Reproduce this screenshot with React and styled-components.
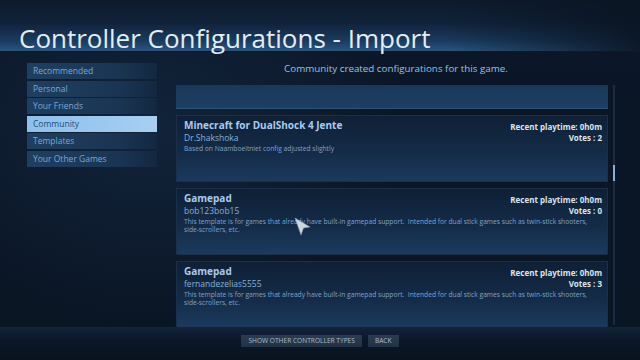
import React from "react";
import styled, { createGlobalStyle } from "styled-components";

const GlobalStyle = createGlobalStyle`
  html, body {
    margin: 0;
    padding: 0;
    background: #0a1422;
  }
  body {
    font-family: "Open Sans", "Noto Sans", sans-serif;
  }
`;

const tabs = [
  "Recommended",
  "Personal",
  "Your Friends",
  "Community",
  "Templates",
  "Your Other Games",
];

const gamepadText =
  "This template is for games that already have built-in gamepad support.  Intended for dual stick games such as twin-stick shooters, side-scrollers, etc.";

const configs = [
  {
    title: "Minecraft for DualShock 4 Jente",
    author: "Dr.Shakshoka",
    text: "Based on Naamboeitniet config adjusted slightly",
    votes: 2,
  },
  { title: "Gamepad", author: "bob123bob15", text: gamepadText, votes: 0 },
  { title: "Gamepad", author: "fernandezelias5555", text: gamepadText, votes: 3 },
];

export default function App() {
  return (
    <Page>
      <GlobalStyle />
      <Header>
        <Title>Controller Configurations - Import</Title>
      </Header>
      <Body>
        <Sidebar>
          {tabs.map(t => (
            <Tab key={t} active={t === "Community"}>
              {t}
            </Tab>
          ))}
        </Sidebar>
        <Main>
          <Subtitle>Community created configurations for this game.</Subtitle>
          <ListRow>
            <List>
              <Stub />
              {configs.map((c, i) => (
                <Card key={i}>
                  <CardInfo>
                    <CardTitle>{c.title}</CardTitle>
                    <Author>{c.author}</Author>
                    <Desc>{c.text}</Desc>
                  </CardInfo>
                  <Stats>
                    <div>Recent playtime: 0h0m</div>
                    <div>Votes : {c.votes}</div>
                  </Stats>
                </Card>
              ))}
            </List>
            <Scrollbar>
              <Thumb />
            </Scrollbar>
          </ListRow>
        </Main>
      </Body>
      <Footer>
        <Button>SHOW OTHER CONTROLLER TYPES</Button>
        <Button>BACK</Button>
      </Footer>
      <Cursor width="18" height="20" viewBox="0 0 18 20">
        <path d="M1 1 L16 10 L9.5 11 L7 18 Z" fill="#cfd6dd" stroke="#8e9aa6" strokeWidth="0.6" />
      </Cursor>
    </Page>
  );
}

const Page = styled.div`
  position: relative;
  width: 640px;
  height: 360px;
  overflow: hidden;
  display: flex;
  flex-direction: column;
  background:
    radial-gradient(ellipse 260px 200px at 150px 130px, rgba(30, 60, 95, 0.35), transparent),
    linear-gradient(180deg, #0b1728 0%, #0a1524 100%);
`;

const Header = styled.div`
  height: 51px;
  flex-shrink: 0;
  display: flex;
  align-items: flex-end;
  border-bottom: 1px solid #0d1828;
  background:
    linear-gradient(90deg, rgba(10, 20, 34, 0) 0%, rgba(10, 20, 34, 0) 70%, rgba(10, 20, 34, 0.9) 100%),
    linear-gradient(180deg, #0d1a2b 0%, #10223a 45%, #1a3b5e 80%, #2a5580 100%);
`;

const Title = styled.div`
  margin: 0 0 -5px 19px;
  font-size: 26px;
  line-height: 36px;
  color: #e4edf5;
  letter-spacing: 0;
  white-space: nowrap;
`;

const Body = styled.div`
  flex: 1;
  display: flex;
  min-height: 0;
`;

const Sidebar = styled.div`
  width: 130px;
  margin: 11px 0 0 27px;
  display: flex;
  flex-direction: column;
  gap: 1.5px;
`;

const Tab = styled.div`
  height: 16px;
  line-height: 16px;
  padding-left: 6px;
  font-size: 8.5px;
  color: ${p => (p.active ? "#234d7a" : "#7ba7d4")};
  background: ${p =>
    p.active
      ? "linear-gradient(90deg, #8ec0ec 0%, #a6cff2 100%)"
      : "linear-gradient(90deg, #1f3f61 0%, #1a3553 70%, #132840 100%)"};
`;

const Main = styled.div`
  flex: 1;
  display: flex;
  flex-direction: column;
  padding-left: 19px;
  min-height: 0;
`;

const Subtitle = styled.div`
  height: 33px;
  padding-top: 10px;
  box-sizing: border-box;
  text-align: center;
  width: 440px;
  font-size: 9.8px;
  color: #9cc0e6;
`;

const ListRow = styled.div`
  flex: 1;
  display: flex;
  min-height: 0;
`;

const List = styled.div`
  width: 432px;
  display: flex;
  flex-direction: column;
  gap: 6px;
  overflow: hidden;
`;

const Stub = styled.div`
  height: 24px;
  flex-shrink: 0;
  box-sizing: border-box;
  background: linear-gradient(180deg, #1a3858 0%, #1d3f63 100%);
  border-bottom: 1px solid #2f5376;
`;

const Card = styled.div`
  height: 67px;
  flex-shrink: 0;
  box-sizing: border-box;
  display: flex;
  justify-content: space-between;
  padding: 3px 6px 0 7px;
  border: 1px solid #1b3048;
  background: linear-gradient(180deg, #0f2036 0%, #142b47 55%, #1b3a5d 100%);
`;

const CardInfo = styled.div`
  display: flex;
  flex-direction: column;
  flex: 1;
`;

const CardTitle = styled.div`
  font-size: 10px;
  font-weight: bold;
  line-height: 13px;
  color: #a9cbf0;
`;

const Author = styled.div`
  font-size: 8.5px;
  line-height: 11px;
  color: #89b0d9;
`;

const Desc = styled.div`
  margin-top: 2px;
  font-size: 6.7px;
  line-height: 8px;
  color: #7fa3ca;
  white-space: pre-wrap;
  max-width: 412px;
`;

const Stats = styled.div`
  position: absolute;
  right: 38px;
  margin-top: 2px;
  text-align: right;
  font-size: 8px;
  font-weight: bold;
  line-height: 11px;
  color: #dbe5ee;
`;

const Scrollbar = styled.div`
  width: 2px;
  margin: 0 0 2px 5px;
  background: #1a2c42;
  position: relative;
`;

const Thumb = styled.div`
  position: absolute;
  top: 80px;
  left: 0;
  width: 2px;
  height: 16px;
  background: #86aed6;
`;

const Footer = styled.div`
  height: 33px;
  flex-shrink: 0;
  display: flex;
  justify-content: center;
  align-items: flex-start;
  gap: 6px;
  padding-top: 8px;
  box-sizing: border-box;
  background: linear-gradient(180deg, #11243a 0%, #0b1727 40%, #09131f 100%);
`;

const Button = styled.div`
  height: 12px;
  line-height: 12px;
  padding: 0 7px;
  font-size: 6.6px;
  color: #aebccb;
  background: linear-gradient(180deg, #2c3c50 0%, #223245 100%);
`;

const Cursor = styled.svg`
  position: absolute;
  left: 294px;
  top: 217px;
`;
